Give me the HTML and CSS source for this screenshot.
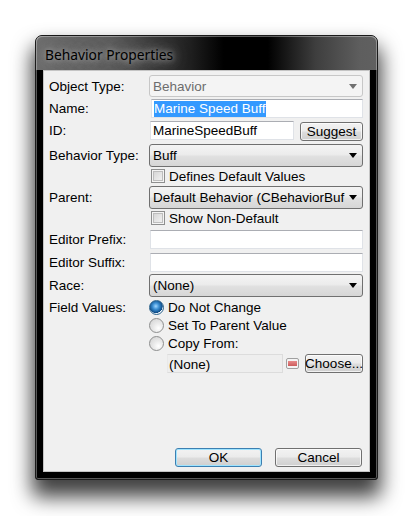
FILE: index.html
```html
<!DOCTYPE html>
<html>
<head>
<meta charset="utf-8">
<link rel="stylesheet" href="styles.css">
</head>
<body>
<div class="window">
  <div class="titlebar"><span class="title">Behavior Properties</span></div>
  <div class="client">
    <div class="row r1">
      <div class="lbl">Object Type:</div>
      <div class="combo disabled"><span class="val">Behavior</span><span class="arrow"></span></div>
    </div>
    <div class="row r2">
      <div class="lbl">Name:</div>
      <div class="textbox name"><span class="sel">Marine Speed Buff</span></div>
    </div>
    <div class="row r3">
      <div class="lbl">ID:</div>
      <div class="textbox idbox">MarineSpeedBuff</div>
      <div class="btn suggest">Suggest</div>
    </div>
    <div class="row r4">
      <div class="lbl">Behavior Type:</div>
      <div class="combo"><span class="val">Buff</span><span class="arrow"></span></div>
    </div>
    <div class="row r5">
      <div class="lbl"></div>
      <div class="check"><span class="box"></span><span>Defines Default Values</span></div>
    </div>
    <div class="row r6">
      <div class="lbl">Parent:</div>
      <div class="combo"><span class="val">Default Behavior (CBehaviorBuf</span><span class="arrow"></span></div>
    </div>
    <div class="row r7">
      <div class="lbl"></div>
      <div class="check"><span class="box"></span><span>Show Non-Default</span></div>
    </div>
    <div class="row r8">
      <div class="lbl">Editor Prefix:</div>
      <div class="textbox wide"></div>
    </div>
    <div class="row r9">
      <div class="lbl">Editor Suffix:</div>
      <div class="textbox wide"></div>
    </div>
    <div class="row r10">
      <div class="lbl">Race:</div>
      <div class="combo"><span class="val">(None)</span><span class="arrow"></span></div>
    </div>
    <div class="row r11">
      <div class="lbl">Field Values:</div>
      <div class="radio"><span class="dot on"></span><span>Do Not Change</span></div>
    </div>
    <div class="row r12">
      <div class="lbl"></div>
      <div class="radio"><span class="dot"></span><span>Set To Parent Value</span></div>
    </div>
    <div class="row r13">
      <div class="lbl"></div>
      <div class="radio"><span class="dot"></span><span>Copy From:</span></div>
    </div>
    <div class="row r14">
      <div class="lbl"></div>
      <div class="readonly">(None)</div>
      <div class="redicon"><span></span></div>
      <div class="btn choose">Choose...</div>
    </div>
    <div class="spacer"></div>
    <div class="buttons">
      <div class="btn ok">OK</div>
      <div class="btn cancel">Cancel</div>
    </div>
  </div>
</div>
</body>
</html>
```
FILE: styles.css
```css
html, body {
  margin: 0;
  padding: 0;
  background: #ffffff;
}
body {
  width: 413px;
  height: 516px;
  overflow: hidden;
  font-family: "Liberation Sans", Arial, sans-serif;
  font-size: 13.5px;
  color: #000;
}
.window {
  margin: 35px 0 0 35px;
  width: 343px;
  height: 445px;
  box-sizing: border-box;
  background: #000;
  border: 1px solid #1a1a1a;
  border-radius: 7px 7px 3px 3px;
  padding: 0 7px 7px 7px;
  display: flex;
  flex-direction: column;
  box-shadow: 0 14px 20px 3px rgba(0,0,0,0.75), inset 0 0 0 1px rgba(255,255,255,0.35);
}
.titlebar {
  height: 34px;
  margin: 0 -7px;
  padding-left: 9px;
  display: flex;
  align-items: center;
  border-radius: 6px 6px 0 0;
  background: linear-gradient(90deg, #6e6e6e 0%, #5e5e5e 22%, #202020 45%, #000 55%, #000 68%, #3e3e3e 82%, #5e5e5e 95%, #606060 100%);
  box-shadow: inset 0 1px 0 rgba(255,255,255,0.35), inset 1px 0 0 rgba(255,255,255,0.3), inset -1px 0 0 rgba(255,255,255,0.3);
}
.title {
  font-family: "Noto Sans", "Open Sans", sans-serif;
  font-size: 13.8px;
  color: #000;
  margin-top: 2px;
  text-shadow: 0 0 5px #a0a0a0, 0 0 9px #909090, 0 0 13px #858585, 0 0 18px #757575;
}
.client {
  flex: 1;
  background: #f0f0f0;
  border: 1px solid #c4c4c4;
  display: flex;
  flex-direction: column;
  padding: 0 6px 4px 5px;
}
.row {
  display: flex;
  align-items: center;
  flex: none;
}
.lbl {
  width: 100px;
  flex: none;
  white-space: nowrap;
}
.r1 { margin-top: 4px; height: 22px; }
.r2 { margin-top: 2px; height: 19px; }
.r3 { margin-top: 3px; height: 19px; }
.r4 { margin-top: 4px; height: 23px; }
.r5 { margin-top: 1px; height: 16px; }
.r6 { margin-top: 2px; height: 23px; }
.r7 { margin-top: 1px; height: 16px; }
.r8 { margin-top: 4px; height: 19px; }
.r9 { margin-top: 4px; height: 19px; }
.r10 { margin-top: 2px; height: 23px; }
.r11 { margin-top: 2px; height: 17px; }
.r12 { margin-top: 1px; height: 17px; }
.r13 { margin-top: 1px; height: 17px; }
.r14 { margin-top: 2px; height: 19px; }

.combo {
  flex: 1;
  height: 100%;
  box-sizing: border-box;
  border: 1px solid #707070;
  border-radius: 3px;
  background: linear-gradient(#f4f4f4 0%, #ececec 45%, #e0e0e0 55%, #d6d6d6 100%);
  display: flex;
  align-items: center;
  padding: 0 5px 0 3px;
  overflow: hidden;
}
.combo .val {
  flex: 1;
  white-space: nowrap;
}
.combo .arrow {
  flex: none;
  margin-left: auto;
  width: 0;
  height: 0;
  border-left: 4.5px solid transparent;
  border-right: 4.5px solid transparent;
  border-top: 5px solid #000;
}
.combo.disabled {
  border-color: #c7c7c7;
  background: #f4f4f4;
  color: #6d6d6d;
}
.combo.disabled .arrow {
  border-top-color: #707070;
}
.textbox {
  box-sizing: border-box;
  height: 100%;
  background: #fff;
  border: 1px solid #dfe2e7;
  border-top-color: #abadb3;
  padding-left: 2px;
  display: flex;
  align-items: center;
  white-space: nowrap;
}
.textbox.name {
  margin-left: 2px;
  width: 212px;
}
.textbox.wide {
  margin-left: 1px;
  width: 213px;
}
.textbox.idbox {
  margin-left: 1px;
  width: 144px;
}
.sel {
  background: #3399ff;
  color: #fff;
  line-height: 16px;
}
.btn {
  box-sizing: border-box;
  border: 1px solid #707070;
  border-radius: 3px;
  background: linear-gradient(#f2f2f2 0%, #ebebeb 48%, #dddddd 52%, #cfcfcf 100%);
  box-shadow: inset 0 0 0 1px rgba(255,255,255,0.7);
  display: flex;
  align-items: center;
  justify-content: center;
  white-space: nowrap;
}
.suggest {
  margin-left: 6px;
  width: 63px;
  height: 19px;
  margin-top: 1px;
}
.check, .radio {
  display: flex;
  align-items: center;
  white-space: nowrap;
}
.check .box {
  width: 14px;
  height: 14px;
  box-sizing: border-box;
  margin-left: 2px;
  margin-right: 4px;
  border: 1px solid #8e8f8f;
  background: linear-gradient(135deg, #cfcfcf 0%, #e6e6e6 55%, #f6f6f6 100%);
  box-shadow: inset 0 0 0 1px #f4f4f4, inset 0 0 0 2px #bdbdbd;
}
.radio .dot {
  width: 15px;
  height: 15px;
  box-sizing: border-box;
  border-radius: 50%;
  border: 1px solid #8e8f8f;
  background: radial-gradient(circle at 65% 70%, #ffffff 0%, #eaeaea 40%, #d0d0d0 100%);
  margin-right: 4px;
  flex: none;
}
.radio .dot.on {
  border-color: #2c628b;
  background:
    radial-gradient(circle at 45% 40%, #9fd6ff 0%, #3b8fd3 30%, #0d4b86 62%, transparent 66%),
    radial-gradient(circle at 65% 70%, #ffffff 0%, #dde9f3 60%, #b8cfe2 100%);
}
.readonly {
  margin-left: 18px;
  width: 117px;
  height: 19px;
  box-sizing: border-box;
  border: 1px solid #dcdcdc;
  border-left-color: #e8e8e8;
  background: #eeeeee;
  padding-left: 1px;
  line-height: 20px;
  white-space: nowrap;
}
.redicon {
  margin-left: 3px;
  width: 13px;
  height: 11px;
  box-sizing: border-box;
  border: 1px solid #a0a0a0;
  border-radius: 2px;
  background: #f4f4f4;
  display: flex;
  align-items: center;
  justify-content: center;
}
.redicon span {
  width: 9px;
  height: 5px;
  background: linear-gradient(#e88a8a, #cc5c5c);
}
.choose {
  margin-left: 6px;
  width: 58px;
  height: 19px;
}
.spacer {
  flex: 1;
}
.buttons {
  display: flex;
  justify-content: flex-end;
  gap: 13px;
  padding-right: 1px;
}
.buttons .btn {
  width: 87px;
  height: 19px;
}
.ok {
  border-color: #3c7fb1 !important;
  box-shadow: inset 0 0 0 1px #9fe4ff;
}
```
